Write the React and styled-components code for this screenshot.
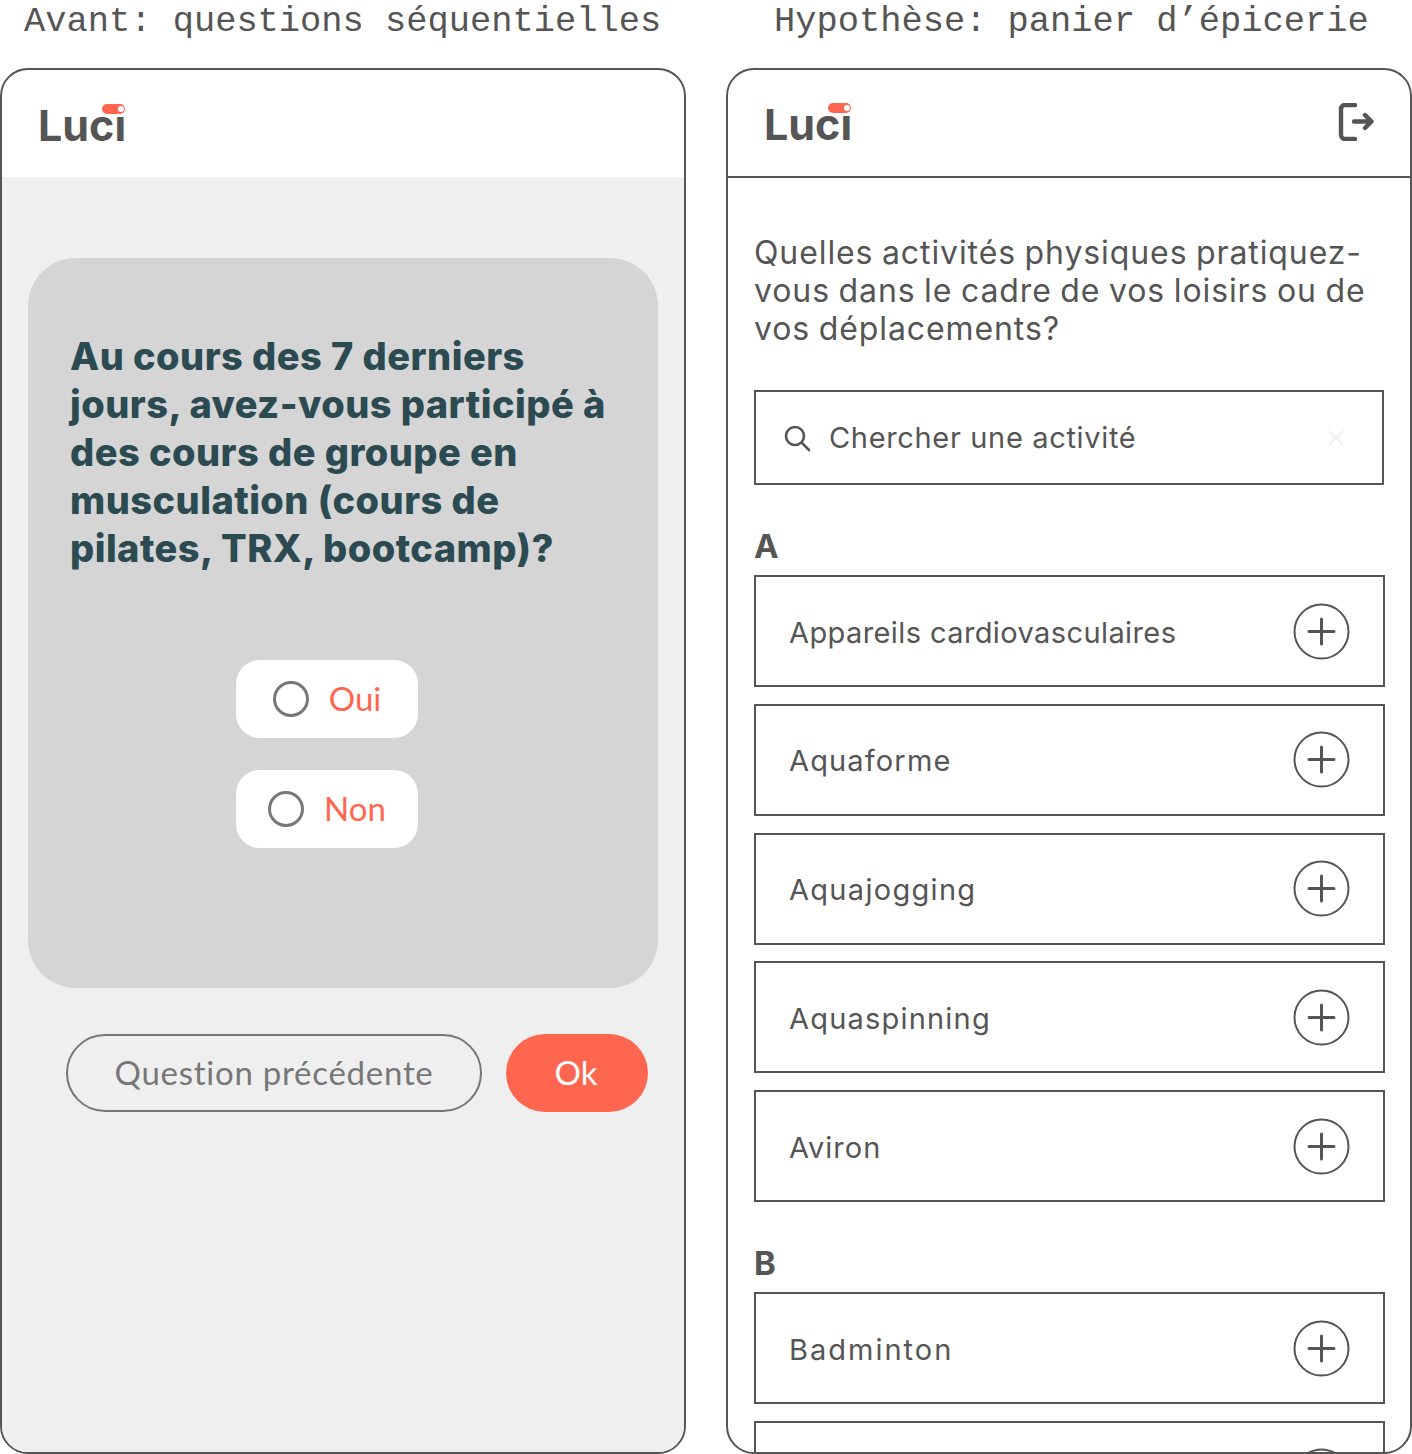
import React from "react";
import styled, { createGlobalStyle } from "styled-components";

const GlobalStyle = createGlobalStyle`
  html, body {
    margin: 0;
    padding: 0;
    background: #fff;
  }
  * {
    box-sizing: border-box;
  }
`;

const Page = styled.div`
  display: grid;
  grid-template-columns: 686px 686px;
  column-gap: 40px;
  width: 1412px;
  height: 1454px;
  overflow: hidden;
  font-family: "Inter", "Liberation Sans", sans-serif;
`;

const Column = styled.section`
  display: flex;
  flex-direction: column;
  height: 1454px;
`;

const Caption = styled.h2`
  height: 68px;
  margin: 0;
  padding: 2px 0 0 ${(p) => p.$left}px;
  font-family: "Liberation Mono", monospace;
  font-size: 35.4px;
  font-weight: 400;
  line-height: 40px;
  color: #555;
  white-space: nowrap;
`;

const Phone = styled.div`
  flex: 1;
  display: flex;
  flex-direction: column;
  border: 2px solid #555;
  border-radius: 28px;
  overflow: hidden;
  background: #fff;
`;

const Header = styled.header`
  flex: none;
  display: flex;
  align-items: center;
  justify-content: space-between;
  height: ${(p) => (p.$ruled ? 108 : 107)}px;
  padding: 0 36px;
  border-bottom: ${(p) => (p.$ruled ? "2px solid #555" : "none")};
`;

const Logo = styled.div`
  position: relative;
  margin-top: 2px;
  font-size: 43px;
  font-weight: 700;
  line-height: 50px;
  letter-spacing: 0;
  color: #555;
`;

const Toggle = styled.span`
  position: absolute;
  right: 1px;
  top: 4px;
  width: 23px;
  height: 10px;
  border-radius: 5px;
  background: #ff6650;
  box-shadow: 0 0 0 1px #fff;

  &::after {
    content: "";
    position: absolute;
    right: 1px;
    top: 2px;
    width: 6px;
    height: 6px;
    border-radius: 50%;
    background: #fff;
  }
`;

const ExitIcon = styled.svg`
  display: block;
  width: 36px;
  height: 38px;
  margin-top: -2px;
  fill: none;
  stroke: #555;
  stroke-width: 4.4;
  stroke-linecap: round;
  stroke-linejoin: round;
`;

const QuizBody = styled.main`
  flex: 1;
  display: flex;
  flex-direction: column;
  padding: 81px 26px 0;
  background: #efefef;
`;

const QuizCard = styled.div`
  display: flex;
  flex-direction: column;
  height: 730px;
  padding: 74px 30px 0 42px;
  border-radius: 48px;
  background: #d5d5d5;
`;

const QuizTitle = styled.h1`
  margin: 0;
  font-size: 38px;
  font-weight: 800;
  line-height: 48px;
  letter-spacing: 0.45px;
  color: #2c4a52;
  white-space: nowrap;
`;

const Choices = styled.div`
  display: flex;
  flex-direction: column;
  align-items: center;
  gap: 32px;
  margin-top: 88px;
  margin-right: 44px;
`;

const Choice = styled.label`
  display: flex;
  align-items: center;
  justify-content: center;
  gap: 20px;
  width: 182px;
  height: 78px;
  padding-bottom: 3px;
  border-radius: 24px;
  background: #fff;
  font-family: "Lato", sans-serif;
  font-size: 33px;
  color: #ff6650;
`;

const Radio = styled.span`
  width: 36px;
  height: 36px;
  margin-top: 2px;
  border: 3.5px solid #777;
  border-radius: 50%;
`;

const QuizActions = styled.div`
  display: flex;
  gap: 24px;
  margin-top: 46px;
  padding-left: 38px;
`;

const PrevButton = styled.button`
  width: 416px;
  height: 78px;
  padding: 0 0 2px;
  border: 2px solid #777;
  border-radius: 39px;
  background: transparent;
  font-family: "Lato", sans-serif;
  font-size: 33px;
  letter-spacing: 0.74px;
  color: #777;
`;

const OkButton = styled.button`
  width: 142px;
  height: 78px;
  padding: 0 2px 2px 0;
  border: none;
  border-radius: 39px;
  background: #ff6650;
  font-family: "Lato", sans-serif;
  font-size: 33px;
  color: #fff;
`;

const ListBody = styled.main`
  flex: 1;
  display: flex;
  flex-direction: column;
  min-height: 0;
  padding: 56px 26px 0;
`;

const Question = styled.p`
  margin: 0;
  font-size: 32px;
  line-height: 38px;
  letter-spacing: 0.9px;
  word-spacing: -1.3px;
  white-space: nowrap;
  color: #555;
`;

const Search = styled.div`
  flex: none;
  display: flex;
  align-items: center;
  height: 95px;
  margin-top: 42px;
  padding: 0 27px;
  border: 2px solid #555;
`;

const SearchIcon = styled.svg`
  flex: none;
  width: 28px;
  height: 28px;
  margin-right: 18px;
  fill: none;
  stroke: #555;
  stroke-width: 2.6;
  stroke-linecap: round;
`;

const SearchText = styled.span`
  flex: 1;
  font-size: 29px;
  letter-spacing: 0.66px;
  color: #555;
`;

const ClearIcon = styled.svg`
  flex: none;
  width: 16px;
  height: 16px;
  margin-right: 11px;
  stroke: #efefef;
  stroke-width: 2;
`;

const Letter = styled.h3`
  flex: none;
  height: 34px;
  margin: ${(p) => p.$top}px 0 12px;
  font-size: 33px;
  font-weight: 700;
  line-height: 34px;
  color: #555;
`;

const Rows = styled.ul`
  flex: none;
  display: flex;
  flex-direction: column;
  gap: 16.75px;
  width: 631px;
  margin: 0;
  padding: 0;
  list-style: none;
`;

const Row = styled.li`
  flex: none;
  display: flex;
  align-items: center;
  justify-content: space-between;
  height: 112px;
  padding: 0 33px 0 33px;
  border: 2px solid #555;
`;

const RowName = styled.span`
  padding-top: 2px;
  font-size: 29px;
  letter-spacing: ${(p) => p.$track}px;
  color: #555;
`;

const PlusIcon = styled.svg`
  flex: none;
  display: block;
  width: 57px;
  height: 57px;
  fill: none;
  stroke: #555;
  stroke-width: 2;
  stroke-linecap: round;
`;

const Plus = () => (
  <PlusIcon viewBox="0 0 57 57">
    <circle cx="28.5" cy="28.5" r="27" />
    <path d="M28.5 16v25M16 28.5h25" strokeWidth="3" />
  </PlusIcon>
);

const LuciLogo = () => (
  <Logo>
    Luci
    <Toggle />
  </Logo>
);

const letterA = [
  { name: "Appareils cardiovasculaires", track: 0.4 },
  { name: "Aquaforme", track: 1.15 },
  { name: "Aquajogging", track: 1.3 },
  { name: "Aquaspinning", track: 1.2 },
  { name: "Aviron", track: 1 },
];

function App() {
  return (
    <Page>
      <GlobalStyle />
      <Column>
        <Caption $left={24}>Avant: questions séquentielles</Caption>
        <Phone>
          <Header>
            <LuciLogo />
          </Header>
          <QuizBody>
            <QuizCard>
              <QuizTitle>
                Au cours des 7 derniers
                <br />
                jours, avez-vous participé à
                <br />
                des cours de groupe en
                <br />
                musculation (cours de
                <br />
                pilates, TRX, bootcamp)?
              </QuizTitle>
              <Choices>
                <Choice>
                  <Radio />
                  Oui
                </Choice>
                <Choice>
                  <Radio />
                  Non
                </Choice>
              </Choices>
            </QuizCard>
            <QuizActions>
              <PrevButton>Question précédente</PrevButton>
              <OkButton>Ok</OkButton>
            </QuizActions>
          </QuizBody>
        </Phone>
      </Column>
      <Column>
        <Caption $left={48}>Hypothèse: panier d’épicerie</Caption>
        <Phone>
          <Header $ruled>
            <LuciLogo />
            <ExitIcon viewBox="0 0 36 38">
              <path d="M17 2H7a4 4 0 0 0-4 4v26a4 4 0 0 0 4 4h10" />
              <path d="M16 18.5h17M27 12l6.5 6.5L27 25" />
            </ExitIcon>
          </Header>
          <ListBody>
            <Question>
              Quelles activités physiques pratiquez-
              <br />
              vous dans le cadre de vos loisirs ou de
              <br />
              vos déplacements?
            </Question>
            <Search>
              <SearchIcon viewBox="0 0 28 28">
                <circle cx="12" cy="12" r="9" />
                <path d="M19 19l7 7" />
              </SearchIcon>
              <SearchText>Chercher une activité</SearchText>
              <ClearIcon viewBox="0 0 16 16">
                <path d="M1 1l14 14M15 1L1 15" />
              </ClearIcon>
            </Search>
            <Letter $top={44}>A</Letter>
            <Rows>
              {letterA.map((item) => (
                <Row key={item.name}>
                  <RowName $track={item.track}>{item.name}</RowName>
                  <Plus />
                </Row>
              ))}
            </Rows>
            <Letter $top={44}>B</Letter>
            <Rows>
              <Row>
                <RowName $track={2}>Badminton</RowName>
                <Plus />
              </Row>
              <Row>
                <span />
                <Plus />
              </Row>
            </Rows>
          </ListBody>
        </Phone>
      </Column>
    </Page>
  );
}

export default App;
